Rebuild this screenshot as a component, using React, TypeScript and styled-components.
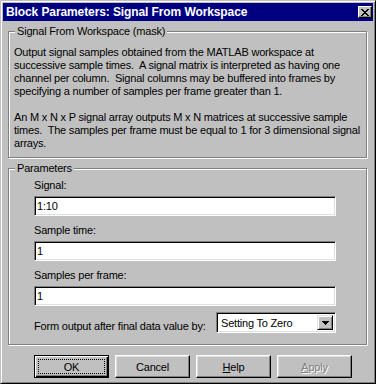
import styled, { createGlobalStyle, css } from "styled-components";

const GlobalStyle = createGlobalStyle`
  body {
    margin: 0;
    background: #c0c0c0;
    font-family: "Liberation Sans", Arial, sans-serif;
  }
`;

const Window = styled.div`
  width: 376px;
  height: 384px;
  box-sizing: border-box;
  padding: 2px;
  background: #c0c0c0;
  border: 1px solid;
  border-color: #c0c0c0 #000 #000 #c0c0c0;
  box-shadow: inset 1px 1px #fff, inset -1px -1px #808080;
  display: flex;
  flex-direction: column;
  font-size: 11px;
  letter-spacing: -0.2px;
  color: #000;
`;

const TitleBar = styled.div`
  height: 18px;
  flex: none;
  display: flex;
  align-items: center;
  padding: 0 1px 0 3px;
  background: #000080;
`;

const Title = styled.span`
  color: #fff;
  font-weight: bold;
  font-size: 12px;
  letter-spacing: -0.1px;
  line-height: 18px;
`;

const CloseButton = styled.div`
  margin-left: auto;
  width: 14px;
  height: 12px;
  box-sizing: border-box;
  background: #c0c0c0;
  border: 1px solid;
  border-color: #fff #000 #000 #fff;
  box-shadow: inset -1px -1px #808080;
  display: flex;
  align-items: center;
  justify-content: center;
`;

const Body = styled.div`
  padding: 10px 6px 0 5px;
  display: flex;
  flex-direction: column;
`;

const Group = styled.div<{ $gap?: number }>`
  position: relative;
  margin-top: ${(p) => p.$gap ?? 0}px;
  border: 1px solid #808080;
  box-shadow: inset 1px 1px #fff, 1px 1px #fff;
  display: flex;
  flex-direction: column;
`;

const Legend = styled.span`
  position: absolute;
  top: -7px;
  left: 6px;
  padding: 0 2px;
  background: #c0c0c0;
  line-height: 13px;
`;

const Description = styled.p`
  margin: 0;
  padding: 14px 5px 7px 5px;
  line-height: 13px;
  white-space: pre;
`;

const Fields = styled.div`
  display: flex;
  flex-direction: column;
  gap: 8px;
  padding: 10px 0 0 25px;
`;

const Field = styled.div`
  display: flex;
  flex-direction: column;
  gap: 4px;
`;

const Label = styled.span`
  line-height: 13px;
`;

const sunken = css`
  box-sizing: border-box;
  border: 1px solid;
  border-color: #808080 #fff #fff #808080;
  box-shadow: inset 1px 1px #000, inset -1px -1px #dfdfdf;
`;

const TextInput = styled.input`
  ${sunken}
  width: 302px;
  height: 20px;
  margin: 0;
  padding: 0 0 0 2px;
  background: #fff;
  font: 11px "Liberation Sans", Arial, sans-serif;
  letter-spacing: -0.2px;
  color: #000;
  outline: none;
`;

const DropRow = styled.div`
  display: flex;
  justify-content: space-between;
  align-items: flex-start;
  width: 302px;
  margin: 6px 0 11px 25px;
`;

const RowLabel = styled.span`
  line-height: 13px;
  margin-top: 8px;
`;

const Select = styled.div`
  ${sunken}
  width: 120px;
  height: 21px;
  background: #fff;
  display: flex;
  align-items: stretch;
  padding: 2px;
`;

const SelectText = styled.span`
  flex: 1;
  padding-left: 2px;
  line-height: 17px;
`;

const ArrowButton = styled.div`
  width: 16px;
  box-sizing: border-box;
  background: #c0c0c0;
  border: 1px solid;
  border-color: #dfdfdf #000 #000 #dfdfdf;
  box-shadow: inset 1px 1px #fff, inset -1px -1px #808080;
  display: flex;
  align-items: center;
  justify-content: center;
`;

const ButtonRow = styled.div`
  display: flex;
  gap: 6px;
  margin-top: 10px;
  padding-left: 26px;
`;

const Button = styled.div<{ $default?: boolean; $disabled?: boolean }>`
  position: relative;
  width: 75px;
  height: 23px;
  box-sizing: border-box;
  background: #c0c0c0;
  border: 1px solid;
  border-color: #fff #000 #000 #fff;
  box-shadow: inset -1px -1px #808080, inset 1px 1px #dfdfdf;
  display: flex;
  align-items: center;
  justify-content: center;
  line-height: 13px;
  padding-top: 1px;
  color: ${(p) => (p.$disabled ? "#808080" : "#000")};
  text-shadow: ${(p) => (p.$disabled ? "1px 1px #fff" : "none")};
  ${(p) =>
    p.$default &&
    css`
      border-color: #000;
      box-shadow: inset 1px 1px #fff, inset -1px -1px #000, inset -2px -2px #808080;
      &::after {
        content: "";
        position: absolute;
        top: 3px;
        left: 3px;
        right: 3px;
        bottom: 3px;
        border: 1px dotted #000;
      }
    `}
`;

const CloseGlyph = () => (
  <svg width="8" height="7" viewBox="0 0 8 7" shapeRendering="crispEdges">
    <path
      d="M0 0h2v1H0zM6 0h2v1H6zM1 1h2v1H1zM5 1h2v1H5zM2 2h4v1H2zM3 3h2v1H3zM2 4h4v1H2zM1 5h2v1H1zM5 5h2v1H5zM0 6h2v1H0zM6 6h2v1H6z"
      fill="#000"
    />
  </svg>
);

const DownArrow = () => (
  <svg width="7" height="4" viewBox="0 0 7 4" shapeRendering="crispEdges">
    <path d="M0 0h7v1H0zM1 1h5v1H1zM2 2h3v1H2zM3 3h1v1H3z" fill="#000" />
  </svg>
);

const description = [
  "Output signal samples obtained from the MATLAB workspace at",
  "successive sample times.  A signal matrix is interpreted as having one",
  "channel per column.  Signal columns may be buffered into frames by",
  "specifying a number of samples per frame greater than 1.",
  "",
  "An M x N x P signal array outputs M x N matrices at successive sample",
  "times.  The samples per frame must be equal to 1 for 3 dimensional signal",
  "arrays.",
].join("\n");

const params = [
  { label: "Signal:", value: "1:10" },
  { label: "Sample time:", value: "1" },
  { label: "Samples per frame:", value: "1" },
];

const App = () => {
  return (
    <>
      <GlobalStyle />
      <Window>
        <TitleBar>
          <Title>Block Parameters: Signal From Workspace</Title>
          <CloseButton>
            <CloseGlyph />
          </CloseButton>
        </TitleBar>
        <Body>
          <Group>
            <Legend>Signal From Workspace (mask)</Legend>
            <Description>{description}</Description>
          </Group>
          <Group $gap={10}>
            <Legend>Parameters</Legend>
            <Fields>
              {params.map((item) => (
                <Field key={item.label}>
                  <Label>{item.label}</Label>
                  <TextInput readOnly value={item.value} />
                </Field>
              ))}
            </Fields>
            <DropRow>
              <RowLabel>Form output after final data value by:</RowLabel>
              <Select>
                <SelectText>Setting To Zero</SelectText>
                <ArrowButton>
                  <DownArrow />
                </ArrowButton>
              </Select>
            </DropRow>
          </Group>
          <ButtonRow>
            <Button $default>OK</Button>
            <Button>Cancel</Button>
            <Button>
              <span>
                <u>H</u>elp
              </span>
            </Button>
            <Button $disabled>
              <span>
                <u>A</u>pply
              </span>
            </Button>
          </ButtonRow>
        </Body>
      </Window>
    </>
  );
};

export default App;
